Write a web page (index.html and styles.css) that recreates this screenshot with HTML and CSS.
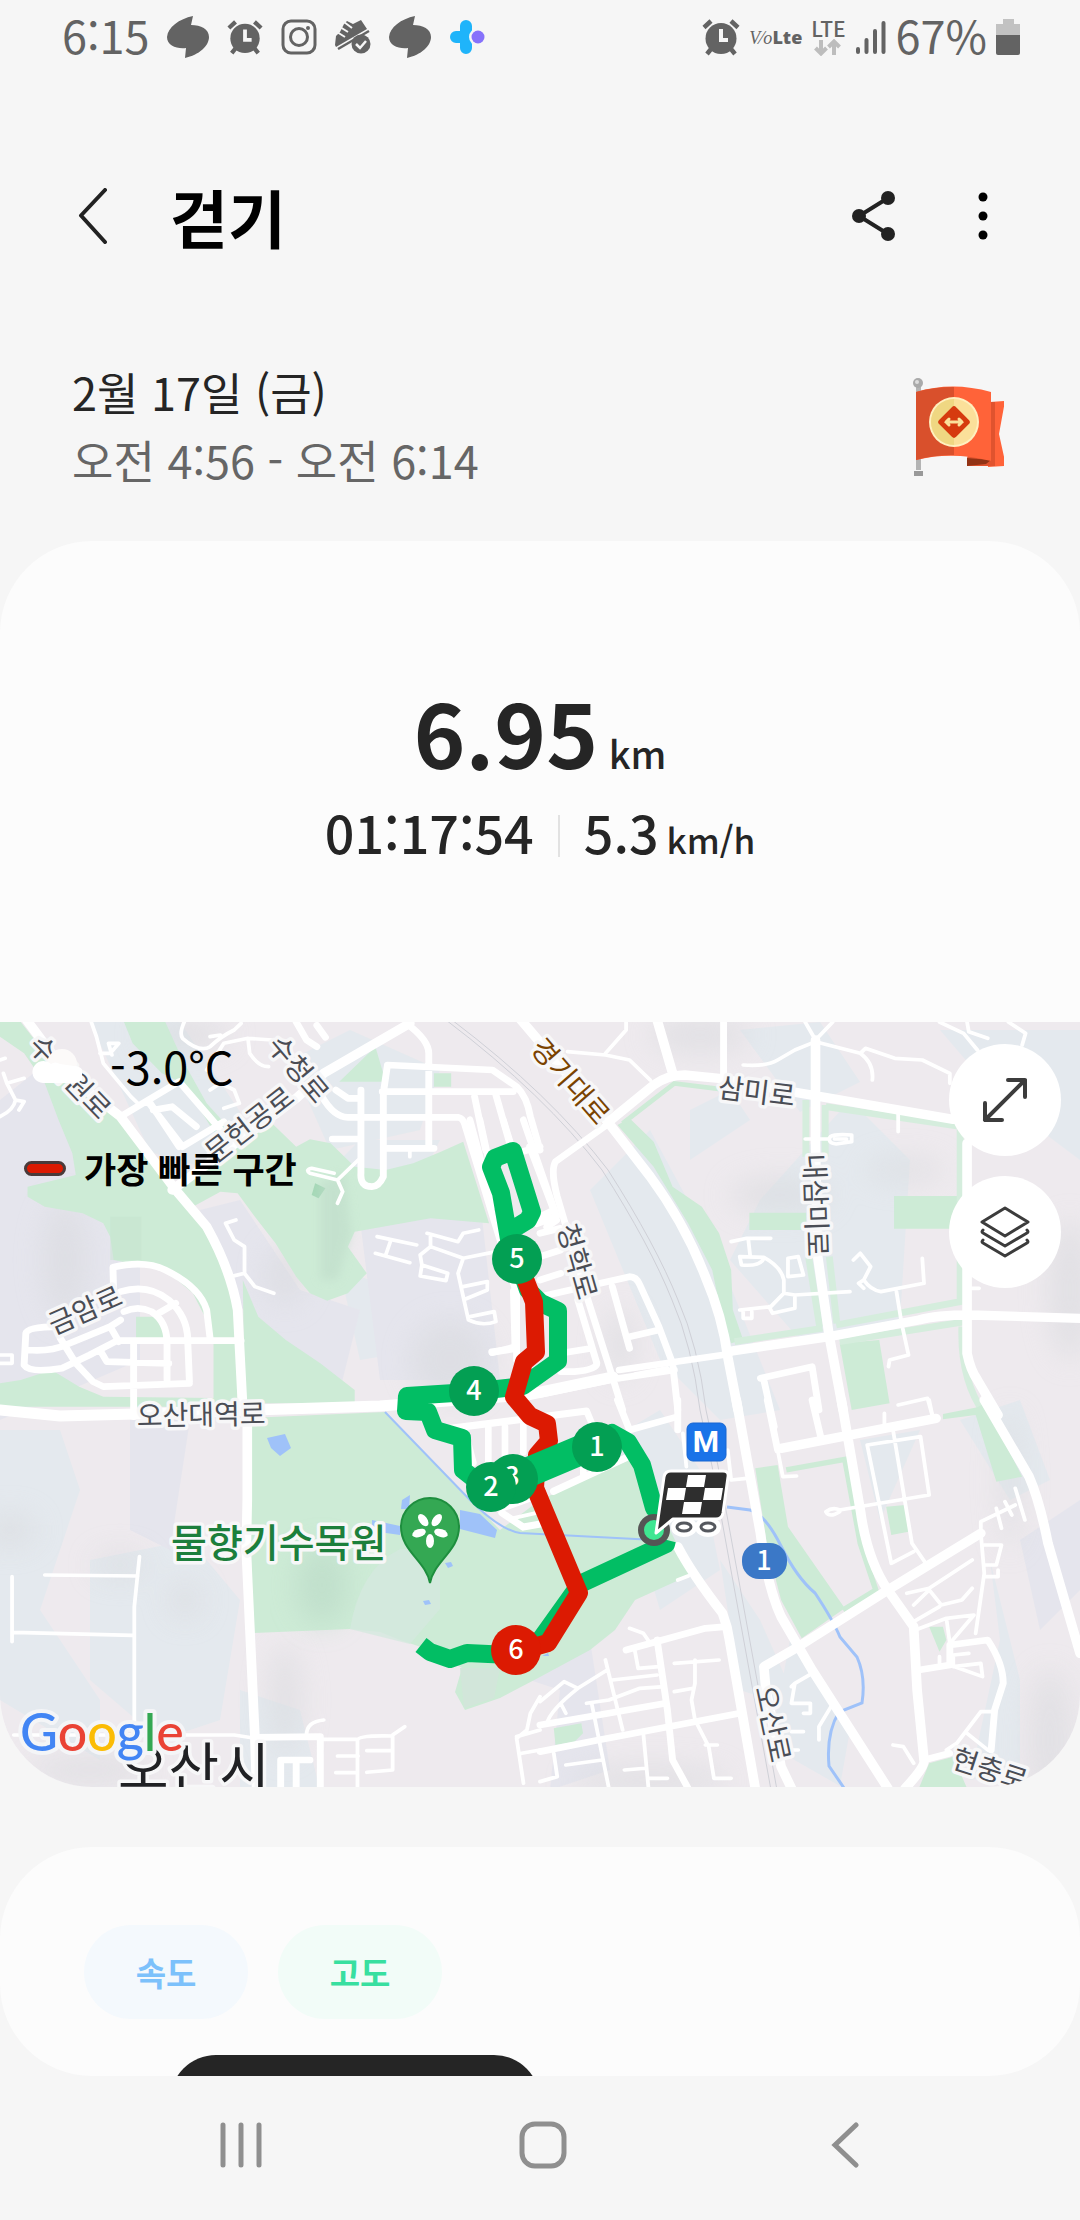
FILE: index.html
```html
<!DOCTYPE html>
<html lang="ko">
<head>
<meta charset="utf-8">
<meta name="viewport" content="width=device-width">
<title>걷기</title>
<link rel="stylesheet" href="styles.css">
</head>
<body>
<svg class="defs" width="0" height="0" aria-hidden="true">
  <symbol id="burst" viewBox="0 0 42 42"><path d="M26 0C12 3 1 11 0 21c0 9 10 12 19 11l-1 10c14-3 24-12 24-21 0-8-8-12-18-12z"/></symbol>
  <symbol id="alarm" viewBox="0 0 38 38"><circle cx="19" cy="20.500" r="15.500"/><path d="M2 9.500L9 3M36 9.500L29 3M5 36l4-5M33 36l-4-5" fill="none" stroke="currentColor" stroke-width="4.500"/><path d="M19 11v11h7" fill="none" stroke="#f6f6f6" stroke-width="4"/></symbol>
</svg>

<div class="status">
  <div class="status-side">
    <span class="clock">6:15</span>
    <svg class="i42" viewBox="0 0 42 42"><use href="#burst"/></svg>
    <svg class="i36" viewBox="0 0 38 38"><use href="#alarm"/></svg>
    <svg class="i36" viewBox="0 0 36 36" fill="none" stroke="currentColor" stroke-width="3"><rect x="2" y="2" width="32" height="32" rx="8"/><circle cx="18" cy="18" r="8.500"/><circle cx="27" cy="9" r="1" stroke-width="2"/></svg>
    <svg class="i36" viewBox="0 0 36 36"><path d="M0 26l1-9 4-4 4-8 3-3 6 3L26 1l6 9-31 18z"/><path d="M3 30L34 12" stroke="currentColor" stroke-width="2.500"/><path d="M2 13l8 5M5 8l8 5M9 3l8 6" stroke="#f6f6f6" stroke-width="2"/><circle cx="26" cy="25" r="9.500"/><path d="M21 25l4 4 6-7" fill="none" stroke="#f6f6f6" stroke-width="2.500"/></svg>
    <svg class="i42" viewBox="0 0 42 42"><use href="#burst"/></svg>
    <svg class="i36" viewBox="0 0 36 36"><path d="M17 7v22M7 18h10" stroke="#1fb4fa" stroke-width="12" stroke-linecap="round"/><circle cx="29" cy="18" r="9" fill="#f6f6f6"/><circle cx="29" cy="18" r="6.500" fill="#8672fb"/></svg>
  </div>
  <div class="status-side status-right">
    <svg class="i38" viewBox="0 0 38 38"><use href="#alarm"/></svg>
    <span class="volte"><i>V⁄o</i><b>Lte</b></span>
    <span class="lte"><b>LTE</b><svg viewBox="0 0 28 17" fill="none" stroke="#bdbdbd" stroke-width="4"><path d="M7 1v13M1.500 9L7 14.500 12.500 9M20 16V3M14.500 8L20 2.500 25.500 8"/></svg></span>
    <svg class="signal" viewBox="0 0 32 36" stroke="currentColor" stroke-width="4" stroke-linecap="round"><path d="M3 30v3M11.500 21v12M20 12v21M28.500 4v29"/></svg>
    <span class="clock">67%</span>
    <svg class="battery" viewBox="0 0 24 36"><path d="M7 0h11v5h6v12H0V5h7z" fill="#c2c2c2"/><path d="M0 16h24v18q0 2-2 2H2q-2 0-2-2z"/></svg>
  </div>
</div>

<header class="bar">
  <button class="icon-btn" aria-label="뒤로"><svg viewBox="0 0 30 56" width="30" height="56" fill="none" stroke="#222" stroke-width="4" stroke-linecap="round" stroke-linejoin="round"><path d="M27 2L3 27.500 27 54"/></svg></button>
  <h1>걷기</h1>
  <div class="bar-actions">
    <button class="icon-btn" aria-label="공유"><svg viewBox="0 0 44 50" width="44" height="50" fill="#222"><path d="M36 7L7 25l29 18" fill="none" stroke="#222" stroke-width="4"/><circle cx="36" cy="7" r="7"/><circle cx="7" cy="25" r="7"/><circle cx="36" cy="43" r="7"/></svg></button>
    <button class="icon-btn" aria-label="더보기"><svg viewBox="0 0 10 50" width="10" height="50"><circle cx="5" cy="6" r="4.500"/><circle cx="5" cy="25" r="4.500"/><circle cx="5" cy="44" r="4.500"/></svg></button>
  </div>
</header>

<section class="when">
  <div>
    <p class="date">2월 17일 (금)</p>
    <p class="time">오전 4:56 - 오전 6:14</p>
  </div>
  <svg class="flag" viewBox="0 0 94 100">
    <path d="M6 8h5v84H6z" fill="#b4b4b4"/><circle cx="8" cy="5" r="5" fill="#aaa"/><circle cx="7" cy="4" r="2" fill="#ddd"/><path d="M4 93h9v5H4z" fill="#999"/>
    <path d="M80 24l15-1-6 33 7 32-18 1z" fill="#ff6339"/><path d="M78 24h7v64l-28 0V80z" fill="#e0532e"/><path d="M57 80l24 2-5 4-19 2z" fill="#923315"/>
    <path d="M6 14Q42 3 81 14v69Q42 73 6 82z" fill="#ff6339"/><path d="M6 14Q24 9 44 9v68Q24 77 6 82z" fill="#d9502c"/>
    <circle cx="44" cy="44" r="25" fill="#fff0bf"/><circle cx="44" cy="44" r="23" fill="#fbe09a"/><path d="M44 21a23 23 0 0 0 0 46z" fill="#efd782"/>
    <rect x="32" y="32" width="24" height="24" rx="3" fill="#d63a0e" transform="rotate(45 44 44)"/>
    <path d="M36 44h16M39 41l-3 3 3 3M49 41l3 3-3 3" stroke="#fbe09a" stroke-width="3" fill="none" stroke-linecap="round"/>
  </svg>
</section>

<main>
<article class="card">
  <div class="summary">
    <p class="distance"><strong>6.95</strong> <span>km</span></p>
    <p class="rates"><strong>01:17:54</strong><i class="rule"></i><strong>5.3</strong><span>km/h</span></p>
  </div>
  <div class="map">
    <svg class="map-art" viewBox="0 1022 1080 765" preserveAspectRatio="xMidYMid slice" role="img" aria-label="지도">
      <defs>
        <filter id="soft" x="-50%" y="-50%" width="200%" height="200%"><feGaussianBlur stdDeviation="14"/></filter>
      </defs>
      <rect x="0" y="1022" width="1080" height="765" fill="#eeeaee"/>
      <g fill="#e4e9ee">
        <path d="M90 1022h90l60 90-20 60-70-20zM290 1060l60-30 90 40-20 60-90 20zM300 1200l60-60 80 0-20 40zM0 1430l60 0 20 60-40 120 60 90 0 60-100-60zM90 1560l100-20 50 60-20 120-60 20-70-60zM240 1690l60 20 20 80-80 0zM590 1190l60-60 70 130 60 150-60 10-60-60zM740 1030l80-8 40 60-60 30zM690 1110l40-20 20 30-60 40zM850 1100l60 60-10 160-100 20-70-80 30-60zM940 1030h140v130l-80-60zM610 1440l50-30 40 60 20 100-60 40zM720 1560l40 60 40 90-60-20zM790 1640l60 90-10 56-70-40zM990 1560l30 120 0 90-50 10 30-140zM860 1440l60-10-40 90zM960 1420l60-20 30 80-40 20zM340 1270l60 20 20 60-60 10z"/>
      </g>
      <g fill="#e5e5ed">
        <path d="M0 1100l50-40 50 80 40 120 0 100-140 60zM200 1210l40-10 60 90 60 20-20 80-120-100zM130 1420l60 0-20 130-40-20zM360 1220l120-20 20 180-120 0zM560 1690l-60-20 0-30 90 0 20 130-60 20zM380 1450l60 30 0 40-40 0zM1020 1540l60-40v90l-40 40z"/>
      </g>
      <g fill="#d9dade" filter="url(#soft)" opacity=".6">
        <ellipse cx="65" cy="1260" rx="22" ry="60"/><ellipse cx="185" cy="1035" rx="45" ry="16"/><ellipse cx="285" cy="1275" rx="20" ry="30"/><ellipse cx="120" cy="1565" rx="26" ry="12"/><ellipse cx="185" cy="1600" rx="16" ry="18"/><ellipse cx="285" cy="1700" rx="16" ry="56"/><ellipse cx="90" cy="1770" rx="60" ry="14"/><ellipse cx="10" cy="1530" rx="26" ry="16"/><ellipse cx="700" cy="1035" rx="50" ry="18"/><ellipse cx="780" cy="1195" rx="50" ry="18"/><ellipse cx="1070" cy="1290" rx="22" ry="70"/><ellipse cx="1050" cy="1740" rx="22" ry="70"/><ellipse cx="1010" cy="1480" rx="10" ry="70"/><ellipse cx="450" cy="1360" rx="40" ry="40"/><ellipse cx="620" cy="1345" rx="14" ry="36"/><ellipse cx="650" cy="1780" rx="80" ry="14"/><ellipse cx="905" cy="1170" rx="40" ry="12"/>
      </g>

      <g fill="#cdebd6">
        <path d="M248 1418L385 1412 500 1530 540 1500 640 1455 655 1500 675 1540 690 1575 635 1600 615 1630 590 1650 540 1677 500 1698 465 1710 455 1692 462 1668 430 1650 400 1640 380 1632 350 1629 253 1633z"/>
        <g transform="translate(0 1010) scale(.3444 .3333)">
          <path d="M0 36H60L200 220 350 320 420 420 510 520 560 590 620 700 670 820 690 980V1170H620V990L610 950 560 850 480 780 330 750 320 680 300 640 240 610 130 590 80 560V530L220 495 210 430 170 330 130 220 70 130 0 80z"/>
          <path d="M360 36H480L530 150 600 280 670 360 640 400 600 330 530 220 470 190 385 100z"/>
          <path d="M510 530L780 330 860 410 900 388 960 400 1030 470 1120 480 1200 460 1280 425 1345 395 1420 640 1250 625 1030 665 1010 710 1065 790 1010 850 950 872 900 850 860 800 800 700 740 620 690 550 640 545 560 590z"/>
          <path d="M1090 110L1120 215H985zM1260 190h50v40h-50zM705 810L750 920 830 990 930 1060 1030 1140V1180H710zM60 1110L150 1080 230 1130 300 1160 690 1165V1190H0V1120zM395 920H450L475 960V985H395z"/>
          <path d="M915 520l30 15-20 30-20-10z" fill="#a5d8b7"/>
          <path d="M930 520l70-30 20 180-40 140-50 0z" fill="#bfdcc9" filter="url(#soft)" opacity=".6"/>
          <path d="M320 620h90v130h-90z" fill="#c3e2cd" opacity=".4"/>
        </g>
        <g transform="translate(540 1010) scale(.3444 .3333)">
          <path d="M225 345L260 325 330 395 385 530 470 590 520 670 555 780 560 900 590 990 555 1000 520 880 500 780 430 640 330 470z"/>
          <path d="M608 608h165v52h-165zM1028 558h200v98h-200zM870 1000L985 990 1015 1180 905 1200z"/>
          <path d="M240 340L390 220 530 238" fill="none" stroke="#cdebd6" stroke-width="14"/>
          <path d="M772 270V440M828 285V440M780 740L812 950M840 740L862 940M830 290L1210 348M1220 350V875L860 945M565 995L820 955M870 995L1235 935M1225 950Q1220 1110 1290 1210" fill="none" stroke="#d5eddd" stroke-width="20"/>
        </g>
        <g transform="translate(540 1400) scale(.3444 .3333)">
          <path d="M625 205L690 195 720 380 885 625 760 715 700 600 660 440zM1005 320L1060 315 1070 395 1020 405zM1170 42L1270 22 1290 10 1400 230 1325 245 1265 45 1170 58zM1130 680H1170L1180 720 1160 755zM1100 1165L1130 1090 1200 1070 1240 1165zM40 985L120 970 125 1000 100 1025 45 1035z"/>
          <path d="M715 210L885 178 930 430 975 570 880 630" fill="none" stroke="#cdebd6" stroke-width="16"/>
        </g>
        <ellipse cx="322" cy="1585" rx="26" ry="40" fill="#bcdbc8" filter="url(#soft)" opacity=".7"/>
        <path d="M350 1629q10-60 50-80h40v60l-30 35z" fill="#d5e9df" opacity=".8"/>
        <path d="M460 1668l40 0-6 30-30 10z" fill="#d2e6da"/>
      </g>

      <g fill="#9fc2f9">
        <path d="M267 1438l18-4 6 14-11 8-9-8zM460 1510l20 4 17 16-2 8-35-9zM372 1520l28 6v9l-28-4zM402 1500l8-5-1 14-8 0zM445 1563l6-1 2 4-5 2zM423 1601l6-1 2 4-6 1zM542 1656l6-3 1 3z"/>
        <g fill="none" stroke="#9fc2f9">
          <path d="M385 1412L470 1500Q500 1530 520 1533L655 1540" stroke-width="2"/>
          <path d="M727 1507L750 1510Q765 1514 781 1546T815 1593Q833 1620 840 1637L857 1657Q866 1677 862 1703L839 1712Q826 1733 829 1766L844 1788" stroke-width="3"/>
        </g>
      </g>

      <g class="rail">
        <path d="M446 1020Q545 1095 602 1170 650 1245 672 1300 692 1345 700 1410L712 1466 771 1790"/>
        <path d="M452 1020Q551 1095 608 1170 656 1245 678 1300 698 1345 706 1410L718 1466 777 1790"/>
      </g>

      <g class="roads">
        <g transform="translate(0 1010) scale(.3444 .3333)">
          <path class="a" d="M70 20L200 200 350 320 430 430 510 540 600 650Q670 780 690 900L705 1200M500 540L860 265 940 190 1190 40"/>
          <path class="b" d="M350 320L520 215M430 270L520 410M430 275L530 410 650 335M520 215L650 370M860 36L890 90 920 110M920 46L945 82M1180 40Q1245 90 1245 130V410M1113 250L1125 165 1430 180 1500 230Q1530 260 1540 320L1568 420M1110 245H1490M935 260Q970 322 1010 322H1330Q1345 325 1350 345L1440 650 1500 850V1050M1113 250V500Q1100 530 1080 530 1045 530 1048 490V240M965 387H1045M1115 415H1260M1378 260L1410 420M1440 255L1480 400M975 240L1010 265H1045M330 850L328 772Q420 750 480 780 580 830 600 900L610 985M350 845Q430 820 490 870 545 920 545 990L550 1115M360 905Q400 885 440 905 485 935 485 1000V1110M340 992H700M388 992V1220M170 950Q80 950 75 970L70 1065Q85 1090 180 1075L260 1035 340 992M80 1020Q150 1025 190 1005L320 950 350 930M175 985L220 1060 270 1115 300 1130 550 1120M290 1020L310 1055 490 1060M320 950L345 995M460 910L510 880M445 300L500 290 570 350M1430 1028L1490 1012M1500 430L1568 410"/>
          <path class="c" d="M400 280L380 260 300 160 280 80 265 36M290 130L320 130 345 100 315 100 325 135M1190 415V440M1040 450L980 510 900 490Q885 480 905 475L970 490M980 510L995 545 980 580M685 630L655 640 680 690 710 710V790L740 830 795 850M710 790L670 800M1095 680L1210 705M1135 690L1120 735M1090 730L1190 758M1240 670L1330 695 1345 670 1390 660M1250 675V710L1220 735 1225 765 1300 790 1295 812 1220 798 1225 765M1250 710L1345 745 1440 725M1345 745L1330 790 1360 930Q1400 950 1440 935L1435 905 1365 920M1345 830L1415 815V840L1350 868M535 36Q520 70 530 85 580 130 610 110 640 80 680 60L700 40M610 80L640 75M790 90L720 85 725 130Q750 170 780 170M720 85L650 100 600 180M610 240L640 220 680 240 695 280 650 295M0 320Q40 300 45 270L20 220 10 190M45 270L70 275 55 300M20 220L70 205M0 1035H35V1060H0M0 150L15 145"/>
        </g>
        <g transform="translate(540 1010) scale(.3444 .3333)">
          <path class="a" d="M-60 24L200 340 320 500Q420 640 480 800 530 920 545 1040L575 1200M200 335L330 225Q370 195 420 195L520 205 730 245 1200 328M340 30L385 190M800 90V400L805 730 840 980 880 1200M1240 400V1030Q1250 1080 1270 1110L1330 1215M0 1150L210 1105M545 1025L840 980M840 980L1100 930Q1150 915 1250 915L1568 925"/>
          <path class="b" d="M533 30V195M200 340L45 455Q30 480 50 560L130 840 210 1100 240 1200M230 1080L530 1035M230 1105L390 1080M130 830L260 800Q280 800 290 825L345 950 385 1060 400 1200M210 830L260 1015M260 980L345 960M110 870L165 1060Q165 1080 100 1085H60M-30 410L40 600 0 620M0 670L60 655M0 740L60 720M0 810L60 790M0 860L110 835M60 1030L150 1015M640 1105L790 1070 810 1200M650 1110L680 1250"/>
          <path class="c" d="M250 36V60L190 130M80 125L190 135 260 150 320 210M770 36L800 90 850 36M590 165Q660 170 690 150L740 120 800 95 930 130Q970 160 965 210M930 130L945 115 1030 145 1110 150 1190 190V220M1160 36L1230 70 1270 120M1240 36L1245 65 1300 85M1360 36L1410 70 1400 105M1040 310V365M770 387H840Q840 370 905 375V395L860 402Q840 400 840 387M855 387H890M555 695L600 685H670M605 690L610 735M650 745Q640 770 585 765L580 740 650 742Q700 770 708 810V850L670 890 580 900M590 905V925H615V905M708 850L740 855 900 845M740 855V895L675 910 665 890M720 745L750 740 765 795 720 800zM910 750L930 730 960 770 940 810Q960 840 990 845L1115 820 1110 745M940 810L925 820 940 835M1035 845L1050 940 1070 1035 1015 1050 1012 1070M1040 1185L1125 1165 1140 1220M1245 835H1275"/>
        </g>
        <path class="j" d="M0 1410L60 1416 135 1414 380 1406 527 1395 613 1377"/>
        <g transform="translate(380 1120) scale(.3333 .3571)">
          <path class="b" d="M200 865L620 815 640 860M325 860V960M375 860V940M430 850V930M255 870L280 960M610 960V1000M520 1040L740 945M365 1100L430 1140 490 1130M500 300L530 280M400 480L405 640 335 650M270 0L340 240M300 0L330 130M370 0L400 90M430 0L530 270 470 290"/>
          <path class="c" d="M370 1090L460 1060M400 1115L470 1100M765 712L862 694"/>
        </g>
        <g transform="translate(0 1400) scale(.3444 .3333)">
          <path class="a" d="M718 50V300L715 450 740 1010 745 1165"/>
          <path class="b" d="M740 1012L930 1010V1165M815 1165V1080H900M860 1080V1165"/>
          <path class="c" d="M405 470L390 620V1005M130 525L400 528M35 530V725M40 697L385 706M40 1005H680L740 1015M890 1005Q890 965 940 960M930 1018H1035M1175 980L1140 1005V1110L1065 1117M1038 1165V1020Q1040 1005 1140 1008M1065 1052H1140M980 1068H1040M975 1118H1035M1568 890L1540 940 1530 990 1500 1015 1520 1150M1500 1010L1568 990M1515 1060L1568 1050"/>
        </g>
        <g transform="translate(540 1400) scale(.3444 .3333)">
          <path class="a" d="M570 0L640 400Q660 560 700 650L790 810 1010 1165M875 0L930 330Q950 480 1010 570L1085 680 1095 870 1115 1080Q1120 1100 1060 1165M1290 0L1420 230Q1450 300 1475 430L1568 760M1280 400L1010 570 750 740 650 800 655 860 700 1100 730 1165M700 145L1150 55M400 440Q440 520 530 640 545 680 550 720L625 1165"/>
          <path class="b" d="M660 0L690 150M790 0L815 110M0 1055L170 1020 580 940M1100 810L1190 795V735L1300 720Q1345 790 1345 850L1320 930 1310 1050M1115 1080L1190 1060M225 0L260 90 400 50M400 0V90M0 975L170 945 365 910M340 720L370 930 385 1080 430 1165M250 750L480 685 540 680"/>
          <path class="c" d="M690 150L705 230 745 228M950 135L1105 110 1130 285 870 330Q850 320 830 335 840 355 870 335M950 135L1020 490 1085 455M1025 90L1080 430 1120 490M1000 40V90M1130 0L1140 50M1280 400V365L1380 315M1380 265L1408 360M1350 305L1370 345M1325 325L1340 385M1280 400L1290 520 1265 700M1290 435H1340L1325 495H1290M1290 530H1330V510M1065 580L1130 565 1255 480M1085 615L1130 570 1165 615 1225 600 1255 565M1085 665L1160 620M1090 690L1180 655 1260 645 1190 730M1180 655L1190 730M1190 795L1285 830 1280 790 1200 800V765L1245 760M1310 935H1280L1210 1030 1180 1050M1240 1000L1300 1050M1025 1035L1055 1040 1085 1090M260 685L300 700 320 730M275 750L285 805 345 800M135 910L200 900 290 865 360 860M190 780L240 990M0 905L70 845 110 865 195 810M20 970Q30 930 110 865M60 910L75 940M150 910L200 1165M210 840L340 825M40 1060L50 1130 0 1145M75 1095L180 1080M245 1110L305 1105M300 1000L315 1165M315 1135H370M450 780V850L440 900 450 960 490 1040 505 1135H555M390 790L520 780M390 875L445 865M480 1035H515M790 820L740 850 730 910H785V940H765M740 850L730 860M845 920L810 980V1020M730 995H765M730 1050H750M545 150L555 240 600 235M415 100L425 200M400 540L430 528M1160 770V790"/>
        </g>
      </g>

      <g class="names">
        <text transform="translate(27 1047) rotate(46)">수목원로</text>
        <text transform="translate(266 1046) rotate(50)">수청로</text>
        <text transform="translate(215 1164) rotate(-38)">문헌공로</text>
        <text transform="translate(54 1335) rotate(-24)">금암로</text>
        <text x="137" y="1426" transform="rotate(-1 137 1426)">오산대역로</text>
        <text class="brown" transform="translate(529 1049) rotate(49)">경기대로</text>
        <text transform="translate(717 1097) rotate(7)">삼미로</text>
        <text transform="translate(804 1154) rotate(88)">내삼미로</text>
        <text transform="translate(557 1227) rotate(74)">청학로</text>
        <text transform="translate(755 1688) rotate(78)">오산로</text>
        <text transform="translate(950 1767) rotate(18)">현충로</text>
        <text class="park" x="171" y="1557">물향기수목원</text>
        <text class="city" x="118" y="1788">오산시</text>
      </g>
      <g fill="#fff" stroke="#fff" stroke-width="12"><ellipse cx="684" cy="1527" rx="7" ry="4"/><ellipse cx="708" cy="1527" rx="7" ry="4"/></g>
      <g fill="#fff" stroke="#55585e" stroke-width="3"><ellipse cx="684" cy="1527" rx="7" ry="4"/><ellipse cx="708" cy="1527" rx="7" ry="4"/></g>

      <path d="M430 1583c-4-22-29-32-29-56a29 29 0 0 1 58 0c0 24-25 34-29 56z" fill="#34a853" stroke="#1e8e3e" stroke-width="2"/>
      <g fill="#fff"><ellipse cx="430" cy="1541" rx="4" ry="7"/><ellipse cx="430" cy="1541" rx="4" ry="7" transform="rotate(72 430 1529.500)"/><ellipse cx="430" cy="1541" rx="4" ry="7" transform="rotate(144 430 1529.500)"/><ellipse cx="430" cy="1541" rx="4" ry="7" transform="rotate(216 430 1529.500)"/><ellipse cx="430" cy="1541" rx="4" ry="7" transform="rotate(288 430 1529.500)"/></g>

      <rect x="687" y="1423" width="39" height="38" rx="6" fill="#1a73e8" stroke="#1967d2"/>
      <text class="metro" x="706" y="1452">M</text>
      <rect x="742" y="1543" width="45" height="36" rx="17" fill="#3b78c7"/>
      <text class="pin" x="764" y="1570">1</text>

      <g class="route">
        <path d="M510 1245L501 1193 491 1167 495 1158 513 1151 532 1212 528 1220 510 1231"/>
        <path d="M517 1259L528 1290 541 1303 558 1311V1361L523 1386 470 1392 407 1396 406 1411 428 1412 435 1430 462 1438 463 1470 482 1485"/>
        <path d="M593 1447L612 1433 628 1442 642 1465 654 1508"/>
        <path d="M667 1540L666 1544 580 1584 540 1640 510 1655 467 1653 450 1659 430 1652 421 1645" stroke-linecap="butt"/>
        <path class="fast" d="M517 1259L527 1284 534 1302 536 1352 524 1362 514 1397 530 1416 547 1424 549 1441 537 1455 535 1488 579 1593 548 1643 516 1652"/>
        <path d="M510 1480L600 1442" stroke-width="30" stroke-linecap="butt" class="wide"/>
      </g>
      <g fill="#039f53"><circle cx="517" cy="1259" r="25"/><circle cx="474" cy="1391" r="25"/><circle cx="597" cy="1447" r="25"/><circle cx="513" cy="1479" r="25"/></g>
      <text class="pin" x="512" y="1486">3</text>
      <circle cx="491" cy="1487" r="25" fill="#039f53"/>
      <circle cx="516" cy="1650" r="25" fill="#dc1a02"/>
      <g class="pin"><text x="517" y="1268">5</text><text x="474" y="1400">4</text><text x="597" y="1456">1</text><text x="491" y="1496">2</text><text x="516" y="1659">6</text></g>

      <circle cx="654" cy="1530" r="13" fill="#3fe692" stroke="#555" stroke-width="6"/>
      <path d="M671 1471h52q6 0 5 6l-5 36q-1 6-7 6h-43l-17 14 8-56q1-6 7-6z" fill="#2e2e2e" stroke="#fff" stroke-width="3" stroke-linejoin="round"/>
      <path d="M688 1475h18l-2 12h-18zM668 1488h18l-2 12h-18zM705 1488h18l-2 12h-18zM684 1502h18l-2 12h-18z" fill="#fff"/>
      <text class="google" x="20" y="1751"><tspan fill="#4285f4">G</tspan><tspan fill="#ea4335">o</tspan><tspan fill="#fbbc05">o</tspan><tspan fill="#4285f4">g</tspan><tspan fill="#34a853">l</tspan><tspan fill="#ea4335">e</tspan></text>
    </svg>
    <div class="map-info">
      <p class="weather"><svg viewBox="0 0 50 34" width="50" height="34"><circle cx="30" cy="15" r="15" fill="#fcfaf9"/><path d="M11 34a11 11 0 1 1 8-19q4-3 9 0l14 2a8 8 0 0 1 2 17z" fill="#fff"/></svg>-3.0°C</p>
      <p class="legend"><i></i>가장 빠른 구간</p>
    </div>
    <div class="map-tools">
      <button aria-label="확대"><svg viewBox="0 0 46 46" width="46" height="46" fill="none" stroke="#3c3c3c" stroke-width="4" stroke-linecap="round" stroke-linejoin="round"><path d="M3 43L43 3M26 3h17v17M3 26v17h17"/></svg></button>
      <button aria-label="지도 유형"><svg viewBox="0 0 50 52" width="50" height="52" fill="none" stroke="#3c3c3c" stroke-width="3" stroke-linejoin="round" stroke-linecap="round"><path d="M25 2L48 16 25 30 2 16zM3 24q-2 2 0 3L25 40 47 27q2-1 0-3M3 34q-2 2 0 3L25 50 47 37q2-1 0-3"/></svg></button>
    </div>
  </div>
</article>

<article class="card chart">
  <div class="chips">
    <button class="chip speed">속도</button>
    <button class="chip height">고도</button>
  </div>
  <div class="tip"></div>
</article>
</main>

<nav class="nav">
  <button aria-label="최근 앱"><svg viewBox="0 0 44 48" width="44" height="48" stroke="#8f8f8f" stroke-width="5" stroke-linecap="round"><path d="M4 4v40M22 4v40M40 4v40"/></svg></button>
  <button aria-label="홈"><svg viewBox="0 0 48 48" width="48" height="48" fill="none" stroke="#8f8f8f" stroke-width="5"><rect x="3" y="3" width="42" height="42" rx="13"/></svg></button>
  <button aria-label="뒤로 가기"><svg viewBox="0 0 28 48" width="28" height="48" fill="none" stroke="#8f8f8f" stroke-width="5" stroke-linecap="round"><path d="M25 4L4 24l21 20"/></svg></button>
</nav>
</body>
</html>
```
FILE: styles.css
```css
* { box-sizing: border-box; margin: 0; padding: 0; }

body {
  display: flex;
  flex-direction: column;
  min-height: 100vh;
  background: #f6f6f6;
  color: #252525;
  font-family: "Noto Sans CJK KR", "Noto Sans", sans-serif;
}

button { border: 0; background: none; font: inherit; color: inherit; display: flex; align-items: center; justify-content: center; }
svg { display: block; flex: none; }
.defs { position: absolute; }

.status {
  display: flex;
  justify-content: space-between;
  height: 74px;
  padding: 0 60px 0 62px;
  color: #636363;
  fill: currentColor;
}
.status-side { display: flex; align-items: center; gap: 18px; }
.status-right { gap: 9px; }
.clock { font-size: 45px; line-height: 70px; height: 74px; font-weight: 400; }
.i42 { width: 42px; height: 42px; }
.i38 { width: 38px; height: 38px; }
.i36 { width: 36px; height: 36px; }
.volte { display: flex; align-items: baseline; font-size: 18px; line-height: 24px; }
.volte i { font-family: "Liberation Serif", serif; font-size: 18px; }
.volte b { font-family: "Open Sans", sans-serif; font-weight: 800; }
.lte { display: flex; flex-direction: column; align-items: center; }
.lte b { font-size: 21px; line-height: 21px; font-weight: 500; }
.lte svg { width: 28px; height: 17px; }
.signal { width: 32px; height: 36px; }
.battery { width: 24px; height: 36px; }

.bar { display: flex; align-items: center; height: 282px; padding: 2px 92px 0 78px; }
.bar h1 { margin-left: 62px; color: #000; font-size: 63px; line-height: 80px; font-weight: 700; }
.bar-actions { display: flex; gap: 82px; margin-left: auto; }

.when { display: flex; align-items: flex-start; justify-content: space-between; height: 185px; padding: 2px 76px 0 72px; }
.when p { font-size: 45px; line-height: 68px; font-weight: 400; }
.when .time { color: #666; }
.flag { width: 94px; height: 100px; margin-top: 20px; }

.card { position: relative; overflow: hidden; border-radius: 92px; background: #fcfcfc; }
.summary { height: 481px; padding-top: 143px; text-align: center; }
.distance { font-size: 38px; line-height: 94px; }
.distance strong { font-size: 88px; font-weight: 700; }
.distance span, .rates span { font-weight: 500; }
.rates { display: flex; justify-content: center; align-items: baseline; gap: 8px; line-height: 64px; font-size: 35px; }
.rates strong { font-size: 52px; font-weight: 500; }
.rule { align-self: center; width: 2px; height: 42px; margin: 0 16px; background: #e2e2e2; }

.map { position: relative; }
.map-art { width: 100%; height: auto; }
.rail { fill: none; stroke: #cfd0d7; stroke-width: 1; }
.roads { fill: none; stroke: #fff; stroke-linecap: round; stroke-linejoin: round; }
.roads .a { stroke-width: 28px; }
.roads .b { stroke-width: 20px; }
.roads .c { stroke-width: 11px; }
.roads .j { stroke-width: 11px; }
.names { fill: #4a4d55; font-size: 28px; stroke: #f7f7f8; stroke-width: 7px; stroke-linejoin: round; paint-order: stroke; }
.names .brown { fill: #7a4300; }
.names .park { fill: #1c7f3c; font-size: 39px; font-weight: 500; }
.names .city { fill: #202124; font-size: 55px; }
.metro { fill: #fff; font-family: Roboto, sans-serif; font-size: 30px; font-weight: 700; text-anchor: middle; }
.pin { fill: #fff; font-size: 27px; font-weight: 500; text-anchor: middle; }
.route { fill: none; stroke: #02be64; stroke-width: 18px; stroke-linecap: round; stroke-linejoin: round; }
.route .fast { stroke: #dc1a02; }
.google { font-family: Lato, sans-serif; font-size: 52px; font-weight: 500; stroke: #f4f5f7; stroke-width: 8px; stroke-linejoin: round; paint-order: stroke; }

.map-info { position: absolute; top: 12px; left: 24px; display: flex; flex-direction: column; gap: 38px; color: #000; }
.map-info p { display: flex; align-items: center; line-height: 64px; }
.weather { gap: 28px; padding-left: 8px; font-size: 45px; }
.legend { gap: 18px; font-size: 35px; font-weight: 700; }
.legend i { width: 42px; height: 15px; border: 3px solid #4a3a3a; border-radius: 8px; background: #dc1a02; }
.map-tools { position: absolute; top: 22px; right: 19px; display: flex; flex-direction: column; gap: 20px; }
.map-tools button { width: 112px; height: 112px; border-radius: 50%; background: #fff; }

.chart { margin-top: 60px; padding: 78px 84px 57px; }
.chips { display: flex; gap: 30px; }
.chip { width: 164px; height: 94px; border-radius: 47px; font-size: 33px; font-weight: 700; }
.speed { background: #f4f9fd; color: #7cc1fb; }
.height { background: #f2fcf8; color: #38dfa0; }
.tip { position: absolute; left: 170px; bottom: -71px; width: 370px; height: 92px; border-radius: 46px; background: #252525; }

.nav { display: grid; grid-template-columns: repeat(3, 1fr); flex: 1; min-height: 140px; padding: 0 84px 6px 90px; align-items: center; }
```
